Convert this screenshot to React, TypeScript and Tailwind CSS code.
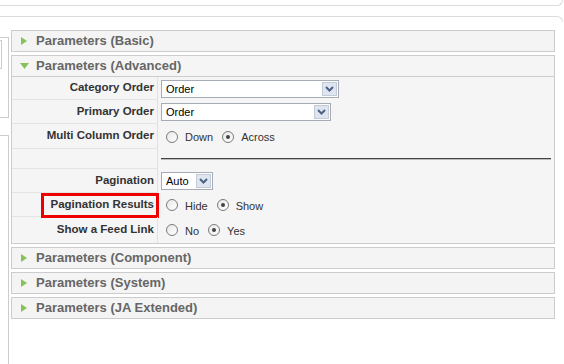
import type { ReactNode } from "react";

const font = { fontFamily: '"Liberation Sans", Arial, sans-serif' };

function Arrow({ open }: { open?: boolean }) {
  return open ? (
    <svg width="9" height="6" viewBox="0 0 9 6" className="mr-[7px] ml-[8px]">
      <polygon points="0,0 9,0 4.5,6" fill="#86c25a" />
    </svg>
  ) : (
    <svg width="6" height="8" viewBox="0 0 6 8" className="mr-[9px] ml-[9px]">
      <polygon points="0,0 6,4 0,8" fill="#86c25a" />
    </svg>
  );
}

function PanelHeader({ title, open }: { title: string; open?: boolean }) {
  return (
    <div className="flex h-[20px] items-center text-[13px] font-bold text-[#666]">
      <Arrow open={open} />
      <span>{title}</span>
    </div>
  );
}

function Collapsed({ title }: { title: string }) {
  return (
    <div className="border border-[#ccc] bg-[#f4f4f4]">
      <PanelHeader title={title} />
    </div>
  );
}

function Select({ value, width }: { value: string; width: number }) {
  return (
    <div
      className="flex h-[18px] items-stretch border border-[#a5acb5] bg-white"
      style={{ width }}
    >
      <span className="flex-1 pl-[4px] text-[11px] leading-[16px] text-black">{value}</span>
      <span className="m-[1px] flex w-[15px] items-center justify-center border border-[#c3cbd9] bg-[#dfe5ef]">
        <svg width="9" height="6" viewBox="0 0 9 6">
          <polyline points="1,1 4.5,4.5 8,1" fill="none" stroke="#4d6185" strokeWidth="2" />
        </svg>
      </span>
    </div>
  );
}

function Radio({ label, checked }: { label: string; checked?: boolean }) {
  return (
    <span className="mr-[9px] flex items-center">
      <span className="flex h-[12px] w-[12px] items-center justify-center rounded-full border border-[#7a7a7a] bg-gradient-to-br from-[#e8e8e8] to-white">
        {checked && <span className="h-[4px] w-[4px] rounded-full bg-[#444]" />}
      </span>
      <span className="ml-[7px] pt-[2px] text-[11px] text-[#333]">{label}</span>
    </span>
  );
}

function Row({
  label,
  height,
  last,
  boxed,
  children,
}: {
  label: string;
  height: number;
  last?: boolean;
  boxed?: boolean;
  children?: ReactNode;
}) {
  return (
    <div className="flex" style={{ height }}>
      <div
        className={`flex w-[146px] items-center justify-end border-r border-[#e2e2e2] pr-[3px] ${
          last ? "" : "border-b border-b-[#e4e4e4]"
        }`}
      >
        {boxed ? (
          <span className="-mr-[5px] mt-[1px] flex h-[25px] w-[118px] items-center justify-end border-[3px] border-[#e00] pr-[2px] text-[11.5px] font-bold text-[#333]">
            {label}
          </span>
        ) : (
          <span className="text-[11.5px] font-bold text-[#333]">{label}</span>
        )}
      </div>
      <div className="flex flex-1 items-center pl-[3px]">{children}</div>
    </div>
  );
}

export default function App() {
  return (
    <div className="h-[364px] w-[564px] overflow-hidden bg-white" style={font}>
      {/* previous box bottom */}
      <div className="mr-[1px] h-[6px] rounded-br-[6px] border-b border-r border-[#dcdcdc]" />
      <div className="mt-[10px] mr-[1px] h-[6px] rounded-tr-[6px] border-t border-r border-[#dcdcdc]" />

      <div className="flex">
        {/* left sidebar edge */}
        <div className="w-[9px]">
          <div className="mt-[15px] flex h-[81px] border-y border-r border-[#ccc]">
            <div className="mt-[2px] h-[29px] w-[2px] border-y border-r border-[#ccc]" />
          </div>
          <div className="mt-[17px] h-[240px] border-t border-r border-[#ccc]" />
        </div>

        <div className="ml-[2px] mt-[8px] flex w-[544px] flex-col gap-[3px]">
          <Collapsed title="Parameters (Basic)" />

          <div className="border border-[#ccc] bg-[#f5f5f5]">
            <div className="border-b border-[#ccc]">
              <PanelHeader title="Parameters (Advanced)" open />
            </div>
            <Row label="Category Order" height={23}>
              <Select value="Order" width={178} />
            </Row>
            <Row label="Primary Order" height={24}>
              <Select value="Order" width={170} />
            </Row>
            <Row label="Multi Column Order" height={25}>
              <div className="ml-[5px] flex">
                <Radio label="Down" />
                <Radio label="Across" checked />
              </div>
            </Row>
            <Row label="" height={20}>
              <div className="mr-[3px] h-[2px] flex-1 border-t border-[#444] border-b-[#bbb] border-b" />
            </Row>
            <Row label="Pagination" height={24}>
              <Select value="Auto" width={52} />
            </Row>
            <Row label="Pagination Results" height={24} boxed>
              <div className="ml-[5px] flex">
                <Radio label="Hide" />
                <Radio label="Show" checked />
              </div>
            </Row>
            <Row label="Show a Feed Link" height={26} last>
              <div className="ml-[5px] flex">
                <Radio label="No" />
                <Radio label="Yes" checked />
              </div>
            </Row>
          </div>

          <Collapsed title="Parameters (Component)" />
          <Collapsed title="Parameters (System)" />
          <Collapsed title="Parameters (JA Extended)" />
        </div>
      </div>
    </div>
  );
}
